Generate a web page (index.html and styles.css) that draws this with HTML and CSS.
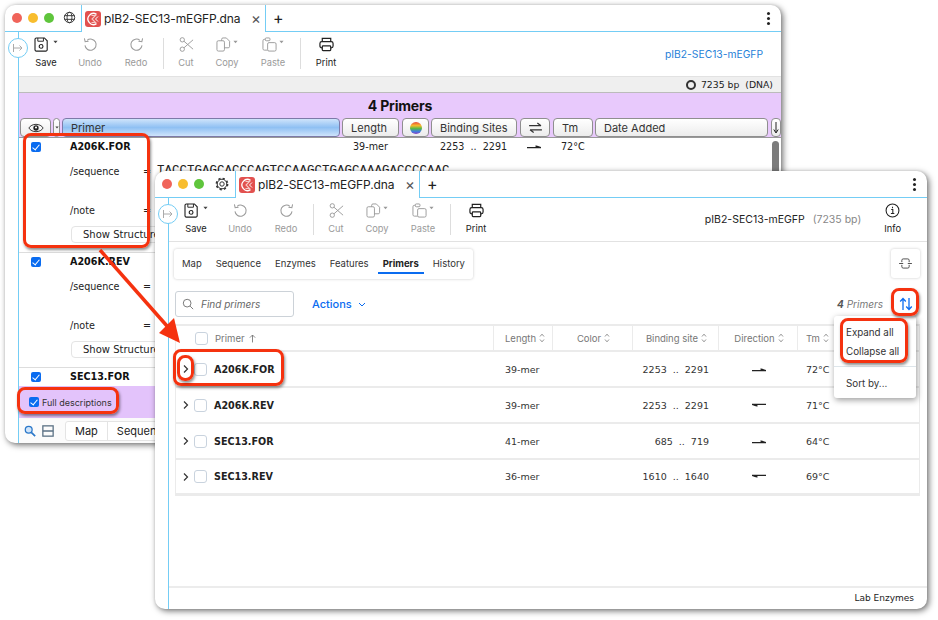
FILE: index.html
```html
<!DOCTYPE html>
<html lang="en">
<head>
    <meta charset="UTF-8">
    <title>Primers</title>
    <link rel="stylesheet" href="styles.css">
</head>
<body>
    <svg class="defs" width="0" height="0">
        <symbol id="i-save" viewBox="0 0 18 16">
            <path d="M2.5 1h8.5l3 3v9.5a1.5 1.5 0 0 1-1.5 1.5h-10A1.5 1.5 0 0 1 1 13.500v-11A1.500 1.500 0 0 1 2.500 1z" fill="none" stroke="currentColor" stroke-width="1.200"/>
            <path d="M4 1v3.500h6V1" fill="none" stroke="currentColor"/>
            <circle cx="7.500" cy="10" r="2" fill="none" stroke="currentColor" stroke-width="1.200"/>
        </symbol>
        <symbol id="i-undo" viewBox="0 0 16 16">
            <path d="M4.300 3.500a6 6 0 1 1-2.200 5.500" fill="none" stroke="currentColor" stroke-width="1.100"/>
            <path d="M1.500 1.500l.8 3.500 3.600-.5" fill="none" stroke="currentColor" stroke-width="1.100"/>
        </symbol>
        <symbol id="i-redo" viewBox="0 0 16 16">
            <path d="M11.700 3.500a6 6 0 1 0 2.200 5.500" fill="none" stroke="currentColor" stroke-width="1.100"/>
            <path d="M14.500 1.500l-.8 3.500-3.600-.5" fill="none" stroke="currentColor" stroke-width="1.100"/>
        </symbol>
        <symbol id="i-cut" viewBox="0 0 16 16">
            <circle cx="3.500" cy="3" r="2.300" fill="none" stroke="currentColor"/>
            <circle cx="3.500" cy="13" r="2.300" fill="none" stroke="currentColor"/>
            <path d="M5.300 4.500L15 13M5.300 11.500L15 3" fill="none" stroke="currentColor"/>
        </symbol>
        <symbol id="i-copy" viewBox="0 0 16 16">
            <rect x="1" y="4" width="8" height="11" rx="1.500" fill="#fff" stroke="currentColor"/>
            <path d="M6 4V2.500A1.500 1.500 0 0 1 7.500 1H11l3.500 3.500V10A1.500 1.500 0 0 1 13 11.500H9" fill="none" stroke="currentColor"/>
        </symbol>
        <symbol id="i-paste" viewBox="0 0 16 16">
            <path d="M4 2.500H2.500A1.500 1.500 0 0 0 1 4v8.500A1.500 1.500 0 0 0 2.500 14H6" fill="none" stroke="currentColor"/>
            <rect x="3.500" y="1" width="5" height="3" rx="1" fill="#fff" stroke="currentColor"/>
            <rect x="6" y="6" width="9" height="9" rx="1.500" fill="#fff" stroke="currentColor"/>
        </symbol>
        <symbol id="i-print" viewBox="0 0 16 16">
            <path d="M3.500 5V1.500h9V5" fill="none" stroke="currentColor" stroke-width="1.300"/>
            <rect x="1" y="5" width="14" height="6.500" rx="2" fill="none" stroke="currentColor" stroke-width="1.300"/>
            <rect x="3.500" y="9.500" width="9" height="5" rx=".8" fill="#fff" stroke="currentColor" stroke-width="1.300"/>
        </symbol>
        <symbol id="i-app" viewBox="0 0 16 16">
            <rect width="16" height="16" rx="3" fill="#e2514f"/>
            <path d="M11.500 3.400A5.500 5.500 0 1 0 11.500 12.600" fill="none" stroke="#fff" stroke-width="1.300"/>
            <path d="M6.500 4.500h4L7 8l3.500 3.500h-4" fill="none" stroke="#f6c9c5" stroke-width="1.100"/>
            <path d="M13 5.500l-2.500 2.500 2.500 2.500" fill="none" stroke="#fff"/>
        </symbol>
        <symbol id="i-fwd" viewBox="0 0 18 8">
            <path d="M0 5.500h18L12 3.500" fill="none" stroke="currentColor" stroke-width="1.600"/>
            <path d="M11 2.500l6 3h-6z" fill="currentColor"/>
        </symbol>
        <symbol id="i-rev" viewBox="0 0 18 8">
            <path d="M18 2.500H0L6 4.500" fill="none" stroke="currentColor" stroke-width="1.600"/>
            <path d="M7 5.500l-6-3h6z" fill="currentColor"/>
        </symbol>
        <symbol id="i-updown" viewBox="0 0 6 10">
            <path d="M1 3.500L3 1.200l2 2.300M1 6.500l2 2.300 2-2.300" fill="none" stroke="currentColor" stroke-width=".8"/>
        </symbol>
        <symbol id="i-chev" viewBox="0 0 9 10">
            <path d="M3 1.500L6.500 5 3 8.500" fill="none" stroke="currentColor" stroke-width="1.200"/>
        </symbol>
        <symbol id="i-caret" viewBox="0 0 6 4">
            <path d="M.5.500h5L3 3.500z" fill="currentColor"/>
        </symbol>
    </svg>

    <!-- back window -->
    <section class="window win-back">
        <header class="titlebar">
            <div class="title-left">
                <span class="light red"></span><span class="light yellow"></span><span class="light green"></span>
                <svg class="corner-icon" viewBox="0 0 14 14"><circle cx="7" cy="7" r="5.600" fill="none" stroke="currentColor"/><ellipse cx="7" cy="7" rx="2.600" ry="5.600" fill="none" stroke="currentColor"/><path d="M1.500 5h11M1.500 9h11" stroke="currentColor" fill="none"/></svg>
            </div>
            <div class="tab">
                <svg class="app-icon"><use href="#i-app"/></svg>
                <span class="tab-name">pIB2-SEC13-mEGFP.dna</span>
                <span class="tab-close">×</span>
            </div>
            <div class="title-rest">
                <span class="plus">+</span>
                <span class="dots"><i></i><i></i><i></i></span>
            </div>
        </header>
        <div class="window-body">
            <div class="rail"><span class="rail-toggle"><svg viewBox="0 0 10 8"><path d="M.5 0v8M1 4h8M6.500 1.500L9 4 6.500 6.500" fill="none" stroke="#aaa"/></svg></span></div>
            <div class="main">
                <div class="toolbar">
                    <div class="tools">
                        <div class="tool"><span class="tool-icon"><svg class="ic ic-save"><use href="#i-save"/></svg><svg class="caret"><use href="#i-caret"/></svg></span>Save</div>
                        <div class="tool off"><span class="tool-icon"><svg class="ic"><use href="#i-undo"/></svg></span>Undo</div>
                        <div class="tool off"><span class="tool-icon"><svg class="ic"><use href="#i-redo"/></svg></span>Redo</div>
                        <div class="tool-sep"></div>
                        <div class="tool off"><span class="tool-icon"><svg class="ic"><use href="#i-cut"/></svg></span>Cut</div>
                        <div class="tool off"><span class="tool-icon"><svg class="ic"><use href="#i-copy"/></svg><svg class="caret"><use href="#i-caret"/></svg></span>Copy</div>
                        <div class="tool off"><span class="tool-icon"><svg class="ic"><use href="#i-paste"/></svg><svg class="caret"><use href="#i-caret"/></svg></span>Paste</div>
                        <div class="tool-sep"></div>
                        <div class="tool"><span class="tool-icon"><svg class="ic"><use href="#i-print"/></svg></span>Print</div>
                    </div>
                    <div class="seq-link">pIB2-SEC13-mEGFP</div>
                </div>
                <div class="status">
                    <span class="ring"></span>
                    <span>7235 bp&nbsp;&nbsp;(DNA)</span>
                </div>
                <div class="old-head">
                    <div class="old-title">4 Primers</div>
                    <div class="old-cols">
                        <div class="old-btn b-eye"><svg viewBox="0 0 18 10"><path d="M1 5c3-5.500 13-5.500 16 0-3 5.500-13 5.500-16 0z" fill="none" stroke="#222"/><circle cx="9" cy="5" r="3" fill="#222"/><circle cx="9" cy="4.500" r="1.200" fill="#fff"/></svg></div>
                        <div class="old-btn b-drop"><svg class="caret"><use href="#i-caret"/></svg></div>
                        <div class="old-btn b-primer">Primer</div>
                        <div class="old-btn b-len">Length</div>
                        <div class="old-btn b-color"><span class="rainbow"></span></div>
                        <div class="old-btn b-sites">Binding Sites</div>
                        <div class="old-btn b-swap"><svg viewBox="0 0 16 12"><path d="M1 4h13M10 1l4 3M15 8.500H2M6 11.500L2 8.500" fill="none" stroke="#333" stroke-width="1.300"/></svg></div>
                        <div class="old-btn b-tm">Tm</div>
                        <div class="old-btn b-date">Date Added</div>
                        <div class="old-btn b-down"><svg viewBox="0 0 6 12"><path d="M3 0v10M.8 7.500L3 11l2.200-3.500" fill="none" stroke="#222"/></svg></div>
                    </div>
                </div>
                <div class="old-list">
                    <div class="old-row">
                        <div class="old-line">
                            <span class="old-check"></span>
                            <b>A206K.FOR</b>
                            <span class="o-len">39-mer</span>
                            <span class="o-site">2253 &nbsp;.. &nbsp;2291</span>
                            <svg class="harpoon"><use href="#i-fwd"/></svg>
                            <span>72°C</span>
                        </div>
                        <div class="old-field f-seq"><span>/sequence</span><span class="eq">=</span><span class="seq">TACCTGAGCACCCAGTCCAAGCTGAGCAAAGACCCCAAC</span></div>
                        <div class="old-field f-note"><span>/note</span><span class="eq">=</span></div>
                        <div class="show-btn">Show Structure</div>
                    </div>
                    <div class="old-row">
                        <div class="old-line">
                            <span class="old-check"></span>
                            <b>A206K.REV</b>
                        </div>
                        <div class="old-field f-seq"><span>/sequence</span><span class="eq">=</span></div>
                        <div class="old-field f-note"><span>/note</span><span class="eq">=</span></div>
                        <div class="show-btn">Show Structure</div>
                    </div>
                    <div class="old-row">
                        <div class="old-line">
                            <span class="old-check"></span>
                            <b>SEC13.FOR</b>
                        </div>
                    </div>
                    <div class="scrollbar"></div>
                </div>
                <div class="old-foot">
                    <span class="old-check"></span>
                    <span>Full descriptions</span>
                </div>
                <div class="old-tabs">
                    <svg class="foot-ic" viewBox="0 0 14 14"><circle cx="5.500" cy="5.500" r="4" fill="#cfe4fa" stroke="#2b78c9" stroke-width="1.500"/><path d="M8.500 8.500l4.500 4.500" stroke="#2b78c9" stroke-width="2"/></svg>
                    <svg class="foot-ic" viewBox="0 0 14 14"><rect x="1" y="1" width="12" height="12" fill="none" stroke="#5a7184" stroke-width="1.500"/><path d="M1 7h12" stroke="#5a7184" stroke-width="1.500"/></svg>
                    <div class="old-tab-strip"><span>Map</span><span>Sequence</span></div>
                </div>
            </div>
        </div>
    </section>

    <!-- front window -->
    <section class="window win-front">
        <header class="titlebar">
            <div class="title-left">
                <span class="light red"></span><span class="light yellow"></span><span class="light green"></span>
                <svg class="corner-icon" viewBox="0 0 14 14"><circle cx="7" cy="7" r="2.200" fill="none" stroke="currentColor"/><circle cx="7" cy="7" r="4.800" fill="none" stroke="currentColor"/><circle cx="7" cy="7" r="5.600" fill="none" stroke="currentColor" stroke-width="1.600" stroke-dasharray="2.200 2.200"/></svg>
            </div>
            <div class="tab">
                <svg class="app-icon"><use href="#i-app"/></svg>
                <span class="tab-name">pIB2-SEC13-mEGFP.dna</span>
                <span class="tab-close">×</span>
            </div>
            <div class="title-rest">
                <span class="plus">+</span>
                <span class="dots"><i></i><i></i><i></i></span>
            </div>
        </header>
        <div class="window-body">
            <div class="rail"><span class="rail-toggle"><svg viewBox="0 0 10 8"><path d="M.5 0v8M1 4h8M6.500 1.500L9 4 6.500 6.500" fill="none" stroke="#aaa"/></svg></span></div>
            <div class="main">
                <div class="toolbar toolbar-line">
                    <div class="tools">
                        <div class="tool"><span class="tool-icon"><svg class="ic ic-save"><use href="#i-save"/></svg><svg class="caret"><use href="#i-caret"/></svg></span>Save</div>
                        <div class="tool off"><span class="tool-icon"><svg class="ic"><use href="#i-undo"/></svg></span>Undo</div>
                        <div class="tool off"><span class="tool-icon"><svg class="ic"><use href="#i-redo"/></svg></span>Redo</div>
                        <div class="tool-sep"></div>
                        <div class="tool off"><span class="tool-icon"><svg class="ic"><use href="#i-cut"/></svg></span>Cut</div>
                        <div class="tool off"><span class="tool-icon"><svg class="ic"><use href="#i-copy"/></svg><svg class="caret"><use href="#i-caret"/></svg></span>Copy</div>
                        <div class="tool off"><span class="tool-icon"><svg class="ic"><use href="#i-paste"/></svg><svg class="caret"><use href="#i-caret"/></svg></span>Paste</div>
                        <div class="tool-sep"></div>
                        <div class="tool"><span class="tool-icon"><svg class="ic"><use href="#i-print"/></svg></span>Print</div>
                    </div>
                    <div class="seq-title">pIB2-SEC13-mEGFP <span>(7235 bp)</span></div>
                    <div class="tool info"><span class="tool-icon"><svg class="ic" viewBox="0 0 14 14"><circle cx="7" cy="7" r="6" fill="none" stroke="#222"/><path d="M5.800 6h1.500v3.500M5.500 9.800h3.200M7 3.600v1.200" fill="none" stroke="#222"/></svg></span>Info</div>
                </div>
                <div class="content">
                    <div class="tabs-row">
                        <nav class="tabs">
                            <span>Map</span><span>Sequence</span><span>Enzymes</span><span>Features</span><span class="active">Primers</span><span>History</span>
                        </nav>
                        <div class="side-btn"><svg viewBox="0 0 14 12"><path d="M3 4.500V2.500A1.500 1.500 0 0 1 4.500 1h5A1.500 1.500 0 0 1 11 2.500V4.500M3 7.500v2A1.500 1.500 0 0 0 4.500 11h5A1.500 1.500 0 0 0 11 9.500V7.500M0 6h4.500M9.500 6h4.500" fill="none" stroke="#444"/></svg></div>
                    </div>
                    <div class="filter-row">
                        <div class="search">
                            <svg viewBox="0 0 14 14"><circle cx="6" cy="6" r="4.500" fill="none" stroke="#666"/><path d="M9.500 9.500L13 13" stroke="#666"/></svg>
                            <span>Find primers</span>
                        </div>
                        <div class="actions">Actions <svg viewBox="0 0 8 5"><path d="M1 1l3 3 3-3" fill="none" stroke="#0a6cf0"/></svg></div>
                        <div class="count"><b>4</b> Primers</div>
                        <div class="sort-btn"><svg viewBox="0 0 14 14"><path d="M4 13V1.500M1.200 4.500L4 1.500l2.800 3M10 1v11.500M7.200 9.500l2.800 3 2.800-3" fill="none" stroke="#0a6cf0" stroke-width="1.300"/></svg></div>
                    </div>
                    <div class="table">
                        <div class="thead">
                            <div class="th th-primer"><span class="box"></span>Primer <svg class="sort-up" viewBox="0 0 8 10"><path d="M4 9.500V1M1 4l3-3 3 3" fill="none" stroke="#777"/></svg></div>
                            <div class="th">Length <svg class="updown"><use href="#i-updown"/></svg></div>
                            <div class="th th-c">Color <svg class="updown"><use href="#i-updown"/></svg></div>
                            <div class="th th-c">Binding site <svg class="updown"><use href="#i-updown"/></svg></div>
                            <div class="th th-c">Direction <svg class="updown"><use href="#i-updown"/></svg></div>
                            <div class="th th-tm">Tm <svg class="updown"><use href="#i-updown"/></svg></div>
                        </div>
                        <div class="tr">
                            <div class="td-name"><svg class="chev"><use href="#i-chev"/></svg><span class="box"></span><b>A206K.FOR</b></div>
                            <div class="td-len">39-mer</div><div></div>
                            <div class="td-site"><span>2253</span><i>..</i><span>2291</span></div>
                            <div class="td-dir"><svg class="harpoon"><use href="#i-fwd"/></svg></div>
                            <div class="td-tm">72°C</div>
                        </div>
                        <div class="tr">
                            <div class="td-name"><svg class="chev"><use href="#i-chev"/></svg><span class="box"></span><b>A206K.REV</b></div>
                            <div class="td-len">39-mer</div><div></div>
                            <div class="td-site"><span>2253</span><i>..</i><span>2291</span></div>
                            <div class="td-dir"><svg class="harpoon"><use href="#i-rev"/></svg></div>
                            <div class="td-tm">71°C</div>
                        </div>
                        <div class="tr">
                            <div class="td-name"><svg class="chev"><use href="#i-chev"/></svg><span class="box"></span><b>SEC13.FOR</b></div>
                            <div class="td-len">41-mer</div><div></div>
                            <div class="td-site"><span>685</span><i>..</i><span>719</span></div>
                            <div class="td-dir"><svg class="harpoon"><use href="#i-fwd"/></svg></div>
                            <div class="td-tm">64°C</div>
                        </div>
                        <div class="tr">
                            <div class="td-name"><svg class="chev"><use href="#i-chev"/></svg><span class="box"></span><b>SEC13.REV</b></div>
                            <div class="td-len">36-mer</div><div></div>
                            <div class="td-site"><span>1610</span><i>..</i><span>1640</span></div>
                            <div class="td-dir"><svg class="harpoon"><use href="#i-rev"/></svg></div>
                            <div class="td-tm">69°C</div>
                        </div>
                    </div>
                </div>
                <footer class="foot">Lab Enzymes</footer>
            </div>
        </div>
    </section>

    <!-- popup over the table -->
    <div class="menu">
        <div class="menu-item">Expand all</div>
        <div class="menu-item">Collapse all</div>
        <div class="menu-line"></div>
        <div class="menu-item">Sort by...</div>
    </div>

    <!-- red callouts -->
    <div class="mark m-row1"></div>
    <div class="mark m-full"></div>
    <div class="mark m-front-row"></div>
    <div class="mark m-chev"></div>
    <div class="mark m-sort"></div>
    <div class="mark m-menu"></div>
    <svg class="arrow" viewBox="0 0 938 620">
        <path d="M100 250L167 326" stroke="#f5320f" stroke-width="3.500" fill="none"/>
        <path d="M159 333L174 318L180 343z" fill="#f5320f"/>
    </svg>
</body>
</html>
```
FILE: styles.css
```css
* {
    margin: 0;
    padding: 0;
    box-sizing: border-box;
}
body {
    position: relative;
    width: 938px;
    height: 620px;
    overflow: hidden;
    background: #fff;
    color: #222;
    font-family: Inter, "Liberation Sans", sans-serif;
    font-size: 11px;
}
.defs {
    position: absolute;
}

/* windows */
.window {
    position: absolute;
    display: flex;
    flex-direction: column;
    height: 438px;
    background: #fff;
    border-radius: 10px;
    overflow: hidden;
    box-shadow: 2px 2px 6px rgba(0, 0, 0, 0.55), 0 0 3px rgba(0, 0, 0, 0.1);
}
.win-back {
    left: 5px;
    top: 5px;
    width: 776px;
}
.win-front {
    left: 155px;
    top: 171px;
    width: 772px;
}
.titlebar {
    display: flex;
    height: 27px;
    flex: none;
}
.title-left {
    position: relative;
    width: 76px;
    border-bottom: 1px solid #74cdf5;
    display: flex;
    align-items: center;
    padding-left: 7px;
    gap: 6px;
}
.win-front .title-left {
    width: 80px;
}
.light {
    width: 10px;
    height: 10px;
    border-radius: 50%;
}
.light.red { background: #f0645a; }
.light.yellow { background: #f8bd2e; }
.light.green { background: #5fc53c; }
.corner-icon {
    position: absolute;
    right: 5px;
    top: 6px;
    width: 13px;
    height: 13px;
    color: #333;
}
.win-front .corner-icon {
    right: 6px;
    width: 14px;
    height: 14px;
}
.tab {
    width: 185px;
    display: flex;
    align-items: center;
    border-left: 1px solid #74cdf5;
    border-right: 1px solid #74cdf5;
    padding-left: 3px;
}
.app-icon {
    width: 16px;
    height: 16px;
    margin-right: 3px;
}
.tab-name {
    font-size: 12px;
    white-space: nowrap;
    flex: 1;
    letter-spacing: -0.1px;
}
.tab-close {
    font-size: 15px;
    color: #555;
    padding-right: 4px;
}
.title-rest {
    flex: 1;
    display: flex;
    align-items: center;
    justify-content: space-between;
    border-bottom: 1px solid #74cdf5;
    padding: 0 11px 0 7px;
}
.plus {
    font-size: 16px;
    color: #222;
}
.dots {
    display: flex;
    flex-direction: column;
    gap: 2px;
}
.dots i {
    width: 3px;
    height: 3px;
    border-radius: 50%;
    background: #222;
}
.window-body {
    flex: 1;
    display: flex;
    min-height: 0;
}
.rail {
    position: relative;
    width: 14px;
    flex: none;
    border-right: 1px solid #74cdf5;
}
.rail-toggle {
    position: absolute;
    left: 3px;
    top: 6px;
    width: 20px;
    height: 20px;
    border: 1px solid #74cdf5;
    border-radius: 50%;
    background: #fff;
    display: flex;
    align-items: center;
    justify-content: center;
    z-index: 2;
}
.rail-toggle svg {
    width: 10px;
    height: 8px;
}
.main {
    flex: 1;
    min-width: 0;
    display: flex;
    flex-direction: column;
}

/* toolbar */
.toolbar {
    height: 44px;
    flex: none;
    display: flex;
    align-items: center;
    padding-left: 4px;
}
.toolbar-line {
    border-bottom: 1px solid #e2e2e2;
}
.tools {
    display: grid;
    grid-template-columns: 46px 42px 50px 5px 40px 42px 50px 5px 46px;
    height: 100%;
}
.tool {
    display: flex;
    flex-direction: column;
    align-items: center;
    padding-top: 5px;
    font-size: 9.300px;
    color: #222;
}
.tool.off {
    color: #9a9a9a;
}
.tool-icon {
    display: flex;
    align-items: flex-start;
    height: 18px;
    margin-bottom: 2px;
}
.ic {
    width: 15px;
    height: 15px;
}
.ic-save {
    width: 17px;
}
.caret {
    width: 5px;
    height: 4px;
    margin: 3px 0 0 2px;
    color: #444;
}
.off .caret {
    color: #999;
}
.tool-sep {
    width: 1px;
    height: 31px;
    margin: 6px 0 0 2px;
    background: #ddd;
}
.seq-link {
    margin-left: auto;
    padding-right: 18px;
    color: #1f7fd8;
    font-size: 10.300px;
}
.seq-title {
    margin-left: auto;
    margin-right: 23px;
    font-size: 10.500px;
    color: #222;
}
.seq-title span {
    color: #888;
    margin-left: 5px;
}
.info {
    align-self: stretch;
    margin-right: 26px;
}

/* old style table, back window */
.status {
    height: 17px;
    flex: none;
    background: #efefef;
    border-top: 1px solid #e2e2e2;
    border-bottom: 1px solid #bbb;
    display: flex;
    align-items: center;
    justify-content: flex-end;
    padding-right: 8px;
    gap: 5px;
    font-family: "DejaVu Sans", sans-serif;
    font-size: 9.300px;
}
.ring {
    width: 10px;
    height: 10px;
    border: 2.500px solid #333;
    border-radius: 50%;
}
.old-head {
    height: 45px;
    flex: none;
    background: #e8c9fc;
    border-bottom: 1px solid #999;
}
.old-title {
    height: 25px;
    line-height: 26px;
    text-align: center;
    font-size: 14px;
    font-weight: 700;
    color: #111;
    letter-spacing: -0.2px;
}
.old-cols {
    display: flex;
    gap: 2px;
    padding-left: 1px;
}
.old-btn {
    height: 19px;
    display: flex;
    align-items: center;
    background: linear-gradient(#fff, #ececec);
    border: 1px solid #8f8f8f;
    border-radius: 4px;
    font-size: 11px;
    color: #333;
    padding-left: 8px;
}
.b-eye { width: 31px; padding-left: 7px; }
.b-eye svg { width: 16px; height: 10px; }
.b-drop { width: 7px; padding-left: 0; justify-content: center; }
.b-drop .caret { margin: 0; width: 4px; height: 3px; }
.b-primer {
    width: 278px;
    background: linear-gradient(#cfe4fb, #8fc0f3 50%, #cfe4fb);
    border-color: #7d7aa8;
}
.b-len { width: 57px; }
.b-color { width: 27px; margin-left: 1px; padding-left: 7px; }
.rainbow {
    width: 12px;
    height: 12px;
    border-radius: 50%;
    background: linear-gradient(#e8483a, #f5b92c 30%, #56b748 55%, #3f7fe0 78%, #8a3fc0);
}
.b-sites { width: 86px; }
.b-swap { width: 30px; margin-left: 1px; padding-left: 7px; }
.b-swap svg { width: 15px; height: 11px; }
.b-tm { width: 40px; margin-left: 1px; }
.b-date { width: 173px; }
.b-down { width: 10px; margin-left: 1px; padding-left: 1px; }
.b-down svg { width: 6px; height: 12px; }

.old-list {
    position: relative;
    flex: 1;
    min-height: 0;
    overflow: hidden;
    font-family: "DejaVu Sans", sans-serif;
    font-size: 9.600px;
    color: #222;
}
.old-row {
    height: 115px;
    padding-left: 12px;
    border-bottom: 1px solid #ddd;
}
.old-line {
    display: flex;
    align-items: center;
    height: 17px;
}
.old-check {
    position: relative;
    width: 10px;
    height: 10px;
    margin-right: 29px;
    border-radius: 2px;
    background: #0a6cf0;
    flex: none;
}
.old-check::after {
    content: "";
    position: absolute;
    left: 3px;
    top: 1px;
    width: 3px;
    height: 6px;
    border: solid #fff;
    border-width: 0 1.500px 1.500px 0;
    transform: rotate(40deg);
}
.old-line b {
    width: 283px;
    flex: none;
    color: #111;
}
.o-len { width: 87px; flex: none; }
.o-site { width: 87px; flex: none; white-space: nowrap; }
.harpoon {
    width: 14px;
    height: 7px;
    color: #222;
}
.old-line .harpoon { margin-right: 20px; }
.old-field {
    display: flex;
    align-items: center;
    height: 18px;
    padding-left: 39px;
}
.f-seq { margin-top: 7px; }
.f-note { margin-top: 21px; }
.old-field > span:first-child { width: 73px; }
.eq { width: 14px; }
.seq {
    font-family: "Liberation Mono", monospace;
    font-size: 12.500px;
}
.show-btn {
    width: 110px;
    height: 17px;
    margin: 7px 0 0 40px;
    padding-left: 11px;
    line-height: 16px;
    background: #fff;
    border: 1px solid #e4e4e4;
    border-radius: 4px;
    white-space: nowrap;
    font-size: 10px;
}
.scrollbar {
    position: absolute;
    right: 2px;
    top: 3px;
    width: 7px;
    height: 100px;
    border-radius: 4px;
    background: #7c7c7c;
}
.old-foot {
    height: 32px;
    flex: none;
    background: #e3c3fb;
    display: flex;
    align-items: center;
    padding-left: 10px;
    font-size: 9px;
    gap: 3px;
    color: #333;
}
.old-foot .old-check {
    margin-right: 0;
}
.old-tabs {
    height: 25px;
    flex: none;
    display: flex;
    align-items: center;
    padding-left: 5px;
    gap: 6px;
    background: #fbfbfb;
}
.foot-ic {
    width: 12px;
    height: 12px;
}
.old-tab-strip {
    display: flex;
    margin-left: 5px;
    font-size: 11px;
    border: 1px solid #e4e4e4;
    border-radius: 3px;
    background: #fff;
}
.old-tab-strip span {
    padding: 2px 9px;
    border-right: 1px solid #e4e4e4;
}

/* new style panel, front window */
.content {
    flex: 1;
    min-height: 0;
    padding: 7px 7px 0 6px;
}
.tabs-row {
    display: flex;
    justify-content: space-between;
    height: 30px;
}
.tabs {
    display: flex;
    align-items: center;
    padding: 0 8px;
    gap: 14px;
    background: #fff;
    border-radius: 3px;
    box-shadow: 0 0 3px rgba(0, 0, 0, 0.22);
    font-size: 9.500px;
    color: #333;
    margin-left: -1px;
}
.tabs span {
    position: relative;
    line-height: 30px;
}
.tabs .active {
    font-weight: 700;
    color: #222;
}
.tabs .active::after {
    content: "";
    position: absolute;
    left: -5px;
    right: -5px;
    bottom: 5px;
    height: 2px;
    background: #0a6cf0;
}
.side-btn {
    width: 29px;
    height: 29px;
    display: flex;
    align-items: center;
    justify-content: center;
    border-radius: 3px;
    box-shadow: 0 0 3px rgba(0, 0, 0, 0.22);
}
.side-btn svg {
    width: 13px;
    height: 11px;
}
.filter-row {
    display: flex;
    align-items: center;
    height: 26px;
    margin: 12px 0 7px;
}
.search {
    width: 119px;
    height: 26px;
    display: flex;
    align-items: center;
    gap: 7px;
    padding-left: 6px;
    border: 1px solid #ccd2d8;
    border-radius: 3px;
    font-size: 10px;
    font-style: italic;
    color: #666;
}
.search svg {
    width: 12px;
    height: 12px;
}
.actions {
    display: flex;
    align-items: center;
    gap: 6px;
    margin-left: 18px;
    font-size: 11px;
    font-weight: 500;
    color: #0a6cf0;
}
.actions svg {
    width: 8px;
    height: 5px;
}
.count {
    margin-left: auto;
    font-size: 10px;
    font-style: italic;
    color: #777;
}
.count b {
    color: #555;
}
.sort-btn {
    width: 28px;
    height: 26px;
    margin-left: 9px;
    display: flex;
    align-items: center;
    justify-content: center;
}
.sort-btn svg {
    width: 14px;
    height: 14px;
}
.table {
    border: 1px solid #ebebeb;
    border-width: 2px 1px 1px 1px;
    width: 745px;
}
.thead, .tr {
    display: grid;
    grid-template-columns: 318px 59px 80px 86px 79px 1fr;
    align-items: center;
}
.thead {
    height: 26px;
    border-bottom: 2px solid #ebebeb;
    color: #777;
    font-size: 9.500px;
}
.th {
    height: 100%;
    display: flex;
    align-items: center;
    gap: 3px;
    padding-left: 11px;
    border-right: 1px solid #ebebeb;
}
.th-c {
    justify-content: center;
    padding-left: 2px;
}
.th-tm {
    border-right: 0;
    padding-left: 8px;
}
.th-primer {
    padding-left: 19px;
    gap: 0;
}
.th-primer .box {
    margin-right: 7px;
}
.sort-up {
    width: 7px;
    height: 9px;
    margin-left: 4px;
}
.updown {
    width: 6px;
    height: 10px;
    color: #777;
}
.box {
    width: 13px;
    height: 13px;
    border: 1px solid #c9d3de;
    border-radius: 3px;
    background: #fff;
    flex: none;
}
.tr {
    height: 36px;
    border-bottom: 2px solid #ebebeb;
    font-family: "DejaVu Sans", sans-serif;
    font-size: 9.500px;
    color: #333;
}
.tr:last-child {
    height: 35px;
}
.td-name {
    display: flex;
    align-items: center;
    padding-left: 5px;
}
.chev {
    width: 9px;
    height: 10px;
    color: #333;
    margin-right: 4px;
}
.td-name b {
    margin-left: 7px;
    color: #222;
    font-size: 9.600px;
}
.td-len {
    padding-left: 11px;
}
.td-site {
    display: flex;
    justify-content: flex-end;
    padding-right: 10px;
    white-space: nowrap;
}
.td-site i {
    font-style: normal;
    margin: 0 6px;
}
.td-dir {
    display: flex;
    justify-content: center;
}
.td-tm {
    padding-left: 8px;
}
.foot {
    height: 23px;
    flex: none;
    border-top: 2px solid #ececec;
    text-align: right;
    padding-right: 13px;
    line-height: 21px;
    font-family: "DejaVu Sans", sans-serif;
    font-size: 9px;
    color: #222;
}

/* popup menu */
.menu {
    position: absolute;
    left: 834px;
    top: 316px;
    width: 82px;
    height: 82px;
    padding-top: 7px;
    background: #fff;
    border-radius: 3px;
    box-shadow: 1px 2px 6px rgba(0, 0, 0, 0.4);
}
.menu-item {
    height: 19px;
    line-height: 19px;
    padding-left: 12px;
    font-size: 9.800px;
    color: #333;
}
.menu-line {
    height: 1px;
    margin: 5px 0 7px;
    background: #dde5ea;
}

/* red callouts */
.mark {
    position: absolute;
    border: 3px solid #f5320f;
    border-radius: 8px;
    box-shadow: 1px 2px 3px rgba(0, 0, 0, 0.45);
}
.m-row1 { left: 23px; top: 133px; width: 127px; height: 115px; }
.m-full { left: 17px; top: 387px; width: 102px; height: 27px; }
.m-front-row { left: 173px; top: 349px; width: 111px; height: 37px; }
.m-chev { left: 177px; top: 355px; width: 17px; height: 26px; }
.m-sort { left: 891px; top: 288px; width: 28px; height: 28px; }
.m-menu { left: 840px; top: 318px; width: 68px; height: 45px; }
.arrow {
    position: absolute;
    left: 0;
    top: 0;
    width: 938px;
    height: 620px;
    pointer-events: none;
}
```
